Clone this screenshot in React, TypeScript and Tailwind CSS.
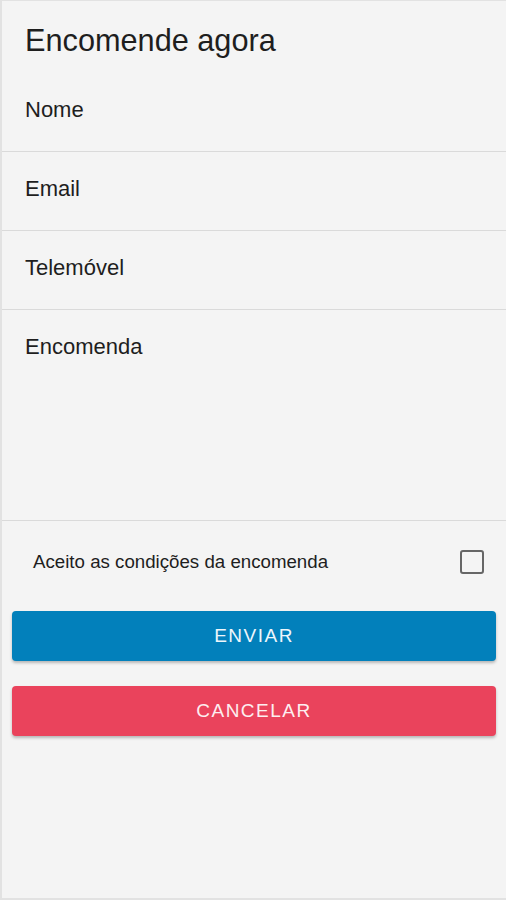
const fields = [
  { label: "Nome", h: "h-[79px]" },
  { label: "Email", h: "h-[79px]" },
  { label: "Telemóvel", h: "h-[79px]" },
  { label: "Encomenda", h: "h-[211px]" },
];

export default function App() {
  return (
    <div
      className="w-[506px] h-[900px] bg-[#f4f4f4] border-l-2 border-t border-b-2 border-[#e2e2e2] flex flex-col text-[#1e1e1e]"
      style={{ fontFamily: '"Liberation Sans", Arial, sans-serif' }}
    >
      <div className="h-[72px] pt-[22px] pl-[23px]">
        <h1 className="text-[30.7px] leading-[36px]">Encomende agora</h1>
      </div>

      {fields.map((f) => (
        <div key={f.label} className={`${f.h} border-b border-[#dadada] pl-[23px] pt-[24px]`}>
          <span className="text-[22px] leading-[26px]">{f.label}</span>
        </div>
      ))}

      <div className="h-[82px] flex items-center justify-between pl-[31px] pr-[22px]">
        <span className="text-[18.7px]">Aceito as condições da encomenda</span>
        <div className="w-[24px] h-[24px] border-2 border-[#666] rounded-[3px]" />
      </div>

      <div className="flex flex-col gap-[25px] px-[10px] pt-[8px]">
        <button className="h-[50px] w-full rounded-[4px] bg-[#0280bb] text-[#eef6fb] text-[19px] tracking-[1.5px] shadow-[0_2px_3px_rgba(0,0,0,0.25)]">
          ENVIAR
        </button>
        <button className="h-[50px] w-full rounded-[4px] bg-[#ea435c] text-[#fdeef0] text-[19px] tracking-[1.5px] shadow-[0_2px_3px_rgba(0,0,0,0.25)]">
          CANCELAR
        </button>
      </div>
    </div>
  );
}
